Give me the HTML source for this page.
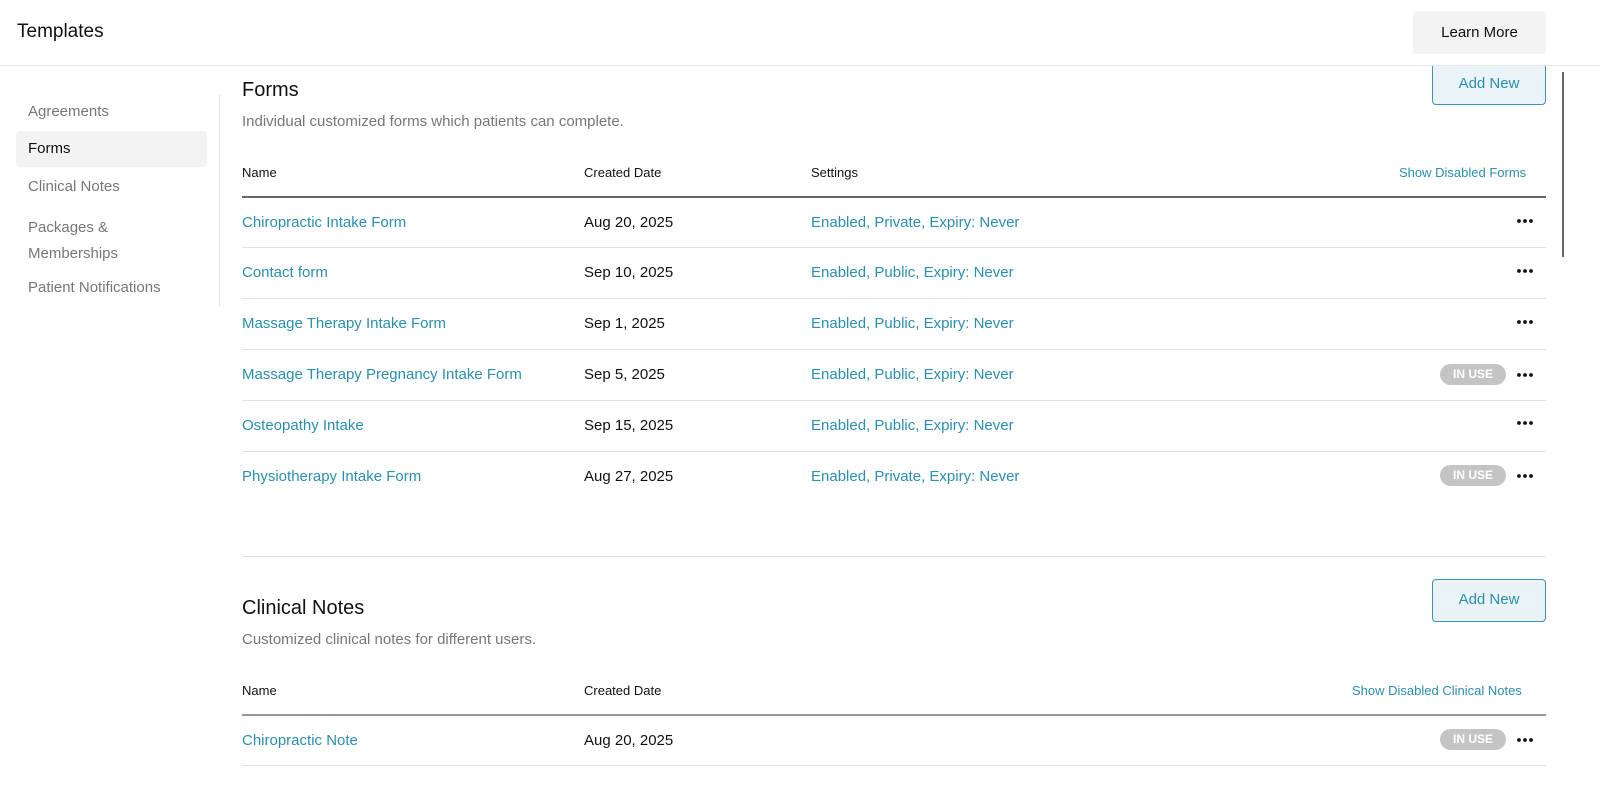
<!DOCTYPE html>
<html><head><style>
*{box-sizing:border-box;margin:0;padding:0}
body{width:1600px;height:793px;overflow:hidden;background:#fff;font-family:"Liberation Sans",sans-serif;color:#111;position:relative}
.a{position:absolute;white-space:nowrap}
.hdr{position:absolute;left:0;top:0;width:1600px;height:66px;border-bottom:1px solid #e8e8e8;background:#fff;z-index:2}
.lm{position:absolute;left:1413px;top:11px;width:133px;height:43px;background:#f3f3f3;border-radius:3px;font-size:15px;line-height:43px;text-align:center;color:#111}
.nav{position:absolute;left:28px;font-size:15px;color:#777}
.btn{position:absolute;left:1432px;width:114px;height:42px;background:#eaf4f8;border:1px solid #3b93b5;border-radius:4px;color:#2a8fb0;font-size:15px;text-align:center;line-height:40px}
.h2{position:absolute;left:242px;font-size:20px;color:#111}
.sub{position:absolute;left:242px;font-size:15px;color:#777}
.th{position:absolute;font-size:13px;color:#111}
.ln{position:absolute;left:242px;width:1304px;height:1px;background:#e3e3e3}
.lk{color:#2a8fb0}
.r{position:absolute;font-size:15px}
.dots{position:absolute;left:1516px;width:18px;height:6px}
.pill{position:absolute;left:1440px;width:66px;height:21px;border-radius:11px;background:#c4c4c4;color:#fff;font-size:12px;font-weight:bold;text-align:center;line-height:21px}
</style></head><body>
<svg width="0" height="0" style="position:absolute"><defs><symbol id="d" viewBox="0 0 18 6"><circle cx="3" cy="3" r="1.9" fill="#111"/><circle cx="9" cy="3" r="1.9" fill="#111"/><circle cx="15" cy="3" r="1.9" fill="#111"/></symbol></defs></svg>
<div class="hdr"><div class="a" style="left:17px;top:21px;font-size:19px">Templates</div><div class="lm">Learn More</div></div>
<div class="btn" style="top:63px">Add New</div>
<div style="position:absolute;left:1562px;top:72px;width:2px;height:185px;background:#666"></div>
<div class="nav" style="top:103px">Agreements</div>
<div style="position:absolute;left:16px;top:131px;width:191px;height:36px;background:#f3f3f3;border-radius:4px"></div>
<div class="nav" style="top:140px;color:#111">Forms</div>
<div class="nav" style="top:178px">Clinical Notes</div>
<div class="nav" style="top:215px;line-height:26px">Packages &amp;<br>Memberships</div>
<div class="nav" style="top:279px">Patient Notifications</div>
<div style="position:absolute;left:219px;top:95px;width:1px;height:211px;background:#e3e3e3"></div>

<div class="h2" style="top:79px">Forms</div>
<div class="sub" style="top:113px">Individual customized forms which patients can complete.</div>
<div class="th" style="left:242px;top:165px">Name</div>
<div class="th" style="left:584px;top:165px">Created Date</div>
<div class="th" style="left:811px;top:165px">Settings</div>
<div class="th lk" style="left:1399px;top:165px">Show Disabled Forms</div>
<div class="ln" style="top:196px;height:2px;background:#666"></div>

<div class="r lk" style="left:242px;top:214px">Chiropractic Intake Form</div><div class="r" style="left:584px;top:214px">Aug 20, 2025</div><div class="r lk" style="left:811px;top:214px">Enabled, Private, Expiry: Never</div><svg class="dots" style="top:218px"><use href="#d"/></svg>
<div class="ln" style="top:247px"></div>
<div class="r lk" style="left:242px;top:264px">Contact form</div><div class="r" style="left:584px;top:264px">Sep 10, 2025</div><div class="r lk" style="left:811px;top:264px">Enabled, Public, Expiry: Never</div><svg class="dots" style="top:268px"><use href="#d"/></svg>
<div class="ln" style="top:298px"></div>
<div class="r lk" style="left:242px;top:315px">Massage Therapy Intake Form</div><div class="r" style="left:584px;top:315px">Sep 1, 2025</div><div class="r lk" style="left:811px;top:315px">Enabled, Public, Expiry: Never</div><svg class="dots" style="top:319px"><use href="#d"/></svg>
<div class="ln" style="top:349px"></div>
<div class="r lk" style="left:242px;top:366px">Massage Therapy Pregnancy Intake Form</div><div class="r" style="left:584px;top:366px">Sep 5, 2025</div><div class="r lk" style="left:811px;top:366px">Enabled, Public, Expiry: Never</div><div class="pill" style="top:364px">IN USE</div><svg class="dots" style="top:372px"><use href="#d"/></svg>
<div class="ln" style="top:400px"></div>
<div class="r lk" style="left:242px;top:417px">Osteopathy Intake</div><div class="r" style="left:584px;top:417px">Sep 15, 2025</div><div class="r lk" style="left:811px;top:417px">Enabled, Public, Expiry: Never</div><svg class="dots" style="top:420px"><use href="#d"/></svg>
<div class="ln" style="top:451px"></div>
<div class="r lk" style="left:242px;top:468px">Physiotherapy Intake Form</div><div class="r" style="left:584px;top:468px">Aug 27, 2025</div><div class="r lk" style="left:811px;top:468px">Enabled, Private, Expiry: Never</div><div class="pill" style="top:465px">IN USE</div><svg class="dots" style="top:473px"><use href="#d"/></svg>

<div class="ln" style="top:556px"></div>
<div class="btn" style="top:579px;height:43px">Add New</div>
<div class="h2" style="top:597px">Clinical Notes</div>
<div class="sub" style="top:631px">Customized clinical notes for different users.</div>
<div class="th" style="left:242px;top:683px">Name</div>
<div class="th" style="left:584px;top:683px">Created Date</div>
<div class="th lk" style="left:1352px;top:683px">Show Disabled Clinical Notes</div>
<div class="ln" style="top:714px;height:2px;background:#999"></div>
<div class="r lk" style="left:242px;top:732px">Chiropractic Note</div><div class="r" style="left:584px;top:732px">Aug 20, 2025</div><div class="pill" style="top:729px">IN USE</div><svg class="dots" style="top:737px"><use href="#d"/></svg>
<div class="ln" style="top:765px"></div>
</body></html>
